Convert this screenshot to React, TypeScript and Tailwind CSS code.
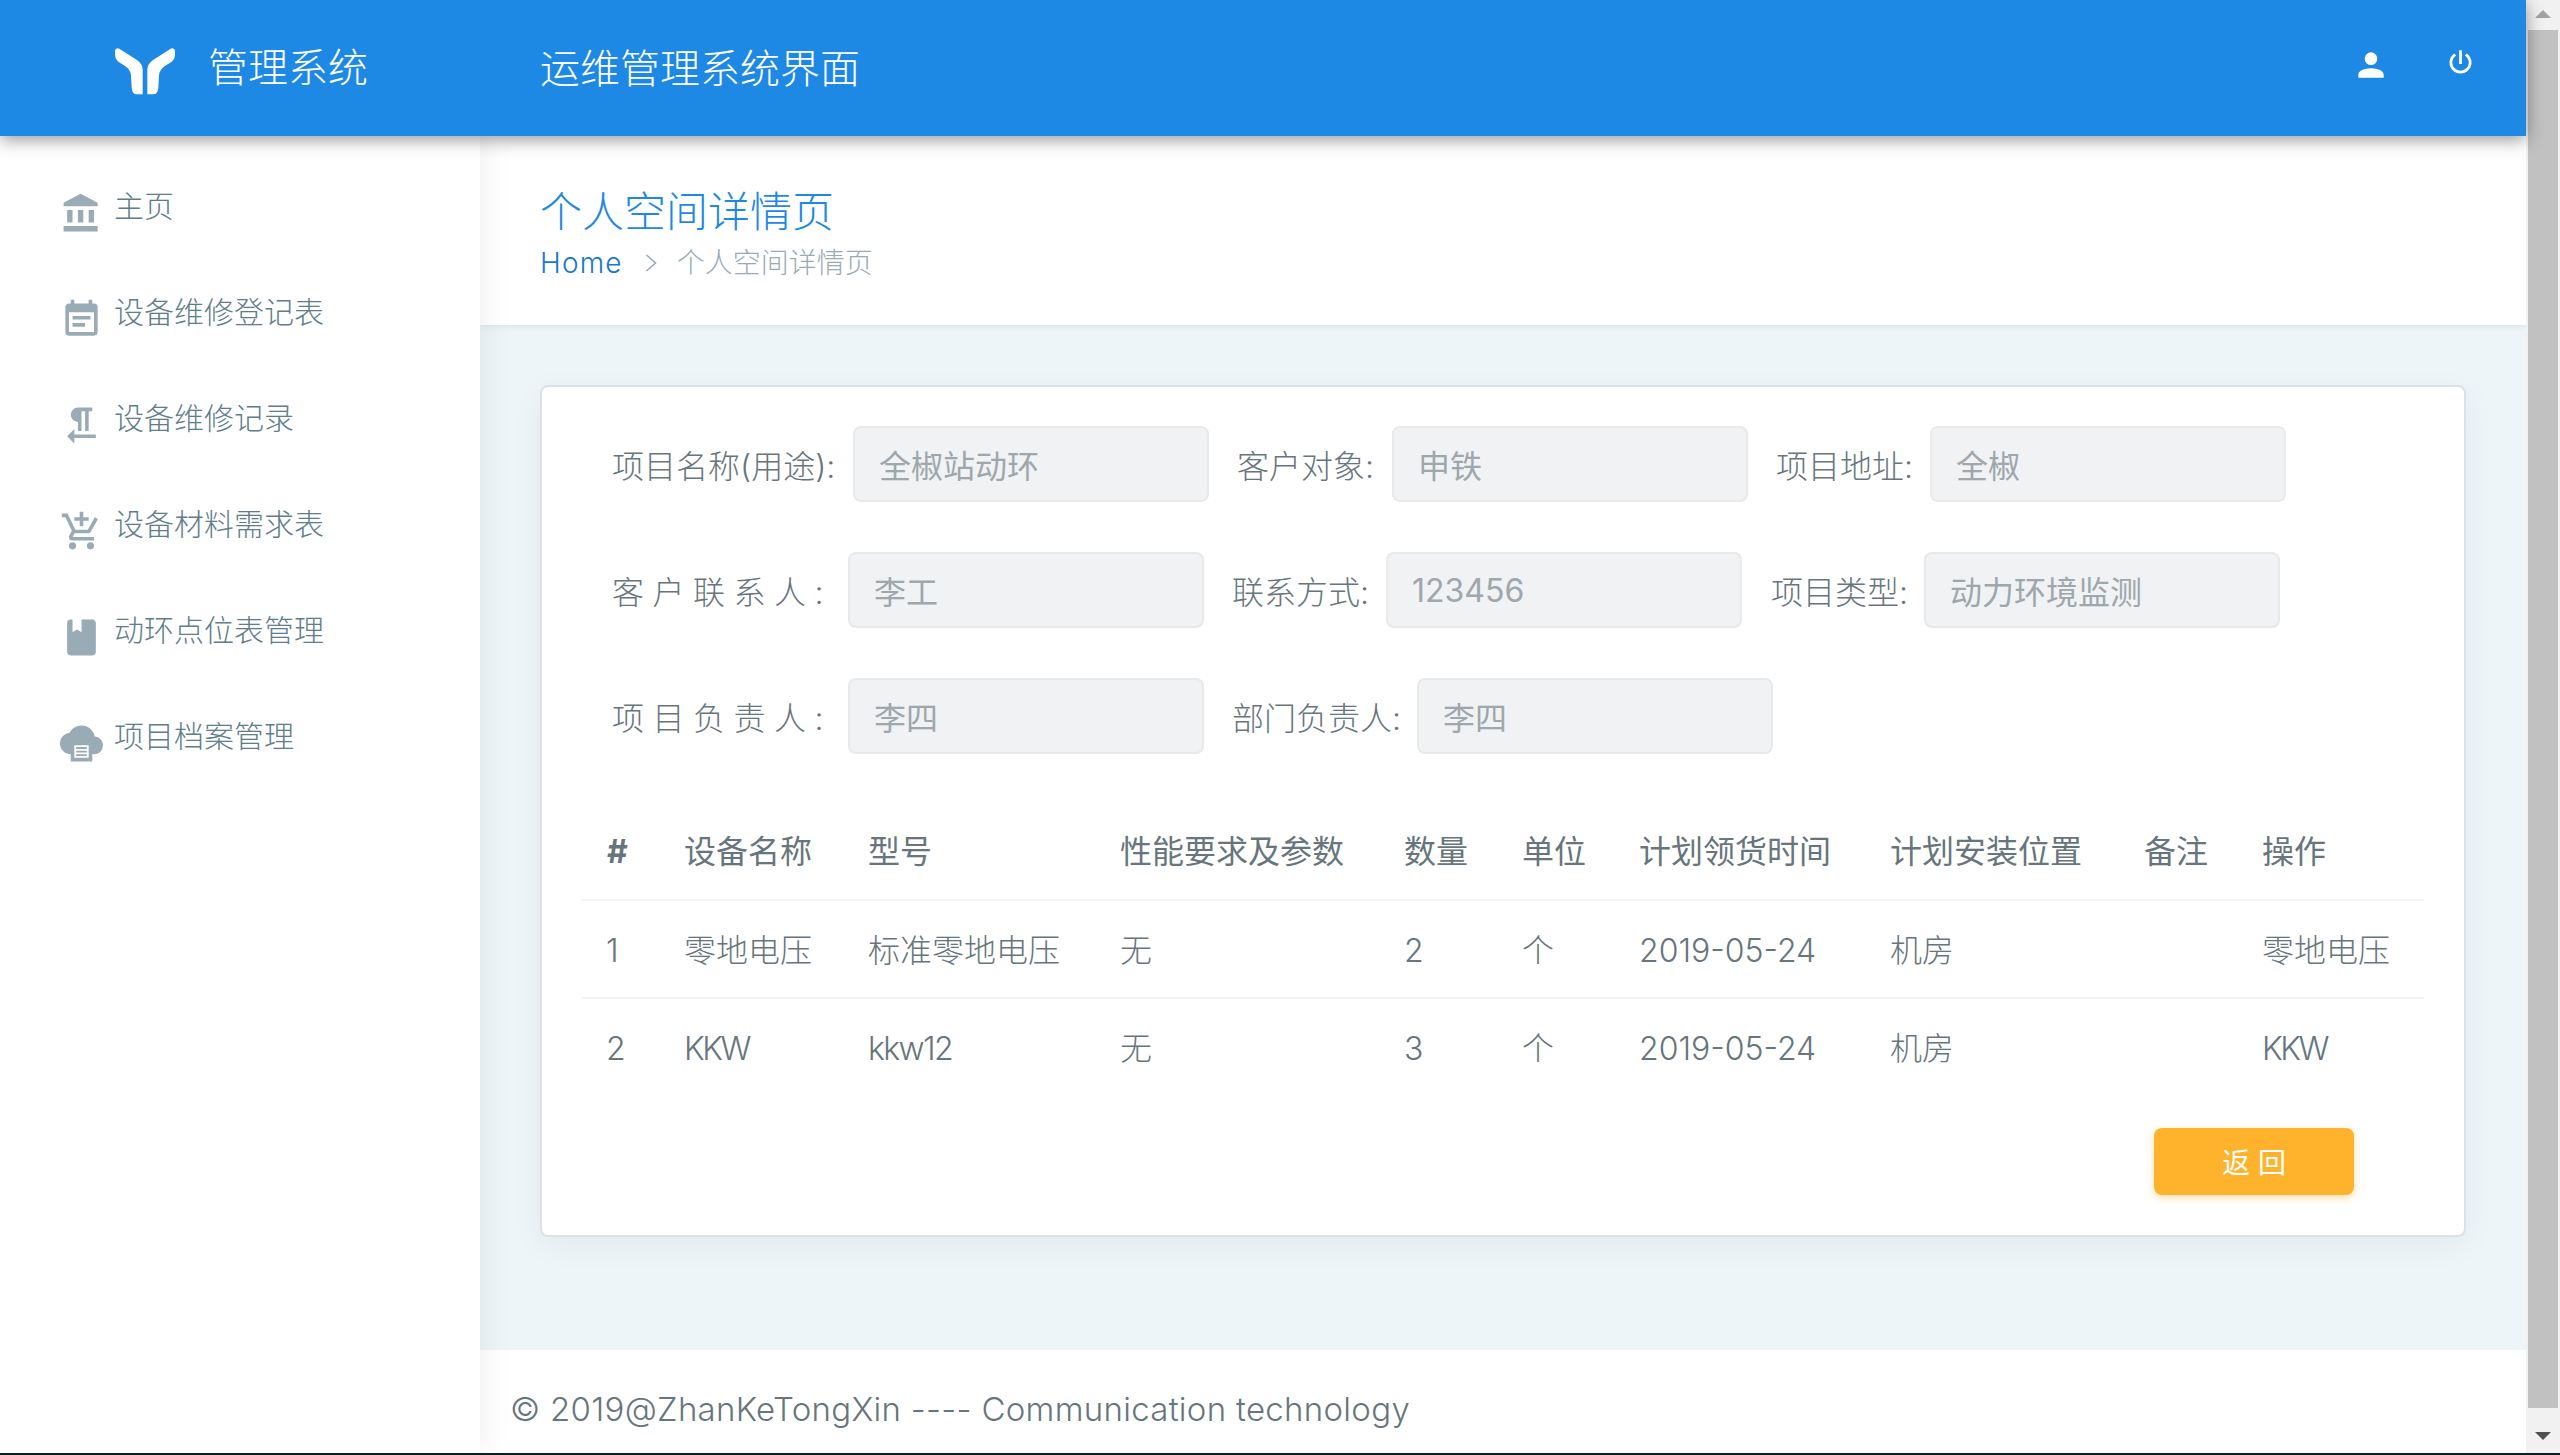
import React from "react";

const fontStack = "font-['Inter','Noto_Sans_CJK_SC',sans-serif]";

const nav = [
  { label: "主页", d: "M11.5,1L2,6V8H21V6M16,10V17H19V10M2,22H21V19H2M10,10V17H13V10M4,10V17H7V10H4Z" },
  { label: "设备维修登记表", d: "M14,14H7V16H14M19,19H5V8H19M19,3H18V1H16V3H8V1H6V3H5C3.89,3 3,3.9 3,5V19A2,2 0 0,0 5,21H19A2,2 0 0,0 21,19V5A2,2 0 0,0 19,3M17,10H7V12H17V10Z" },
  { label: "设备维修记录", d: "M8,17V14L4,18L8,22V19H20V17M10,10V15H12V4H14V15H16V4H18V2H10A4,4 0 0,0 6,6A4,4 0 0,0 10,10Z" },
  { label: "设备材料需求表", d: "M11,9H13V6H16V4H13V1H11V4H8V6H11M7,18A2,2 0 0,0 5,20A2,2 0 0,0 7,22A2,2 0 0,0 9,20A2,2 0 0,0 7,18M17,18A2,2 0 0,0 15,20A2,2 0 0,0 17,22A2,2 0 0,0 19,20A2,2 0 0,0 17,18M7.17,14.75L7.2,14.63L8.1,13H15.55C16.3,13 16.96,12.59 17.3,11.97L21.16,4.96L19.42,4H19.41L18.31,6L15.55,11H8.53L8.4,10.73L6.16,6L5.21,4L4.27,2H1V4H3L6.6,11.59L5.25,14.04C5.09,14.32 5,14.65 5,15A2,2 0 0,0 7,17H19V15H7.42C7.29,15 7.17,14.89 7.17,14.75Z" },
  { label: "动环点位表管理", d: "M18,22A2,2 0 0,0 20,20V4C20,2.89 19.1,2 18,2H12V9L9.5,7.5L7,9V2H6A2,2 0 0,0 4,4V20A2,2 0 0,0 6,22H18Z" },
  { label: "项目档案管理", d: "M12,2C9.11,2 6.6,3.64 5.35,6.04C2.34,6.36 0,8.91 0,12A6,6 0 0,0 6,18V22H18V18H19A5,5 0 0,0 24,13C24,10.36 21.95,8.22 19.35,8.04C18.67,4.59 15.64,2 12,2M8,13H16V20H8V13M9,14V15H15V14H9M9,16V17H15V16H9M9,18V19H15V18H9Z" },
];

const columns = [
  { t: "#", w: "w-[79px] pl-[25px] font-bold" },
  { t: "设备名称", w: "w-[183px] pl-[23px] font-normal" },
  { t: "型号", w: "w-[253px] pl-[24px] font-normal" },
  { t: "性能要求及参数", w: "w-[284px] pl-[23px] font-normal" },
  { t: "数量", w: "w-[118px] pl-[23px] font-normal" },
  { t: "单位", w: "w-[117px] pl-[23px] font-normal" },
  { t: "计划领货时间", w: "w-[252px] pl-[23px] font-normal" },
  { t: "计划安装位置", w: "w-[253px] pl-[22px] font-normal" },
  { t: "备注", w: "w-[118px] pl-[23px] font-normal" },
  { t: "操作", w: "w-[185px] pl-[23px] font-normal" },
];

const rows = [
  ["1", "零地电压", "标准零地电压", "无", "2", "个", "2019-05-24", "机房", "", "零地电压"],
  ["2", "KKW", "kkw12", "无", "3", "个", "2019-05-24", "机房", "", "KKW"],
];

function cellClass(v: string, j: number) {
  const pad = j === 0 ? "pl-[24px]" : j === 2 ? "pl-[24px]" : j === 7 ? "pl-[22px]" : "pl-[23px]";
  const track = v === "KKW" ? "tracking-[-2.5px]" : v === "kkw12" ? "tracking-[-1.6px]" : "";
  return `p-0 pt-[3px] font-light whitespace-nowrap ${pad} ${track}`;
}

function Field({ label, value, labelClass }: { label: string; value: string; labelClass: string }) {
  return (
    <>
      <label className={`shrink-0 whitespace-nowrap pt-[5px] text-[32px] font-light text-[#67757c] ${labelClass}`}>{label}</label>
      <input
        readOnly
        value={value}
        className="h-[76px] w-[356px] shrink-0 rounded-[8px] border-2 border-[#e7e9eb] bg-[#f1f2f4] px-[24px] text-[32px] font-normal text-[#9ea7ab] outline-none"
      />
    </>
  );
}

export default function App() {
  return (
    <div className={`flex h-[1455px] w-[2560px] flex-col overflow-hidden bg-white ${fontStack}`}>
      <div className="flex h-[1453px] w-full">
        <div className="flex h-full w-[2526px] flex-col">
          <header className="relative z-20 flex h-[136px] shrink-0 items-start bg-[#1e88e5] shadow-[0_4px_16px_rgba(0,0,0,0.4)]">
            <div className="flex h-full w-[540px] shrink-0 items-center pl-[115px]">
              <svg viewBox="195 50 180 144" className="mt-[5px] h-[48px] w-[60px]" fill="#ffffff">
                <path d="M195 62Q196 50 208 55L262 90Q278 102 278 118L278 192L258 192Q246 190 245 172L243 135Q241 118 226 108L205 94Q195 86 195 72Z" />
                <path d="M375 62Q374 50 362 55L308 90Q292 102 292 118L292 192L312 192Q324 190 325 172L327 135Q329 118 344 108L365 94Q375 86 375 72Z" />
              </svg>
              <span className="ml-[33px] text-[40px] font-light whitespace-nowrap text-white">管理系统</span>
            </div>
            <div className="flex h-full items-center pt-[2px] text-[40px] font-light whitespace-nowrap text-white">运维管理系统界面</div>
            <div className="ml-auto flex items-start gap-[54px] pt-[46px] pr-[49px] text-white">
              <svg viewBox="0 0 24 24" className="h-[38px] w-[38px]" fill="currentColor">
                <path d="M12,4A4,4 0 0,1 16,8A4,4 0 0,1 12,12A4,4 0 0,1 8,8A4,4 0 0,1 12,4M12,14C16.42,14 20,15.79 20,18V20H4V18C4,15.79 7.58,14 12,14Z" />
              </svg>
              <svg viewBox="0 0 24 24" className="h-[33px] w-[33px]" fill="currentColor">
                <path d="M16.56,5.44L15.11,6.89C16.84,7.94 18,9.83 18,12A6,6 0 0,1 12,18A6,6 0 0,1 6,12C6,9.83 7.16,7.94 8.88,6.88L7.44,5.44C5.36,6.88 4,9.28 4,12A8,8 0 0,0 12,20A8,8 0 0,0 20,12C20,9.28 18.64,6.88 16.56,5.44M13,3H11V13H13" />
              </svg>
            </div>
          </header>

          <div className="flex min-h-0 flex-1">
            <aside className="relative z-10 w-[480px] shrink-0 bg-white pt-[24px] shadow-[1px_0_32px_rgba(0,0,0,0.08)]">
              <nav className="flex flex-col">
                {nav.map((n) => (
                  <a key={n.label} className="flex h-[106px] items-center gap-[11px] pl-[60px]">
                    <svg viewBox="0 0 24 24" className="h-[43px] w-[43px] shrink-0 text-[#99abb4]" fill="currentColor" fillRule="evenodd">
                      <path d={n.d} />
                    </svg>
                    <span className="pb-[13px] text-[30px] font-light whitespace-nowrap text-[#607d8b]">{n.label}</span>
                  </a>
                ))}
              </nav>
            </aside>

            <main className="flex min-w-0 flex-1 flex-col bg-[#eef5f9]">
              <div className="h-[189px] shrink-0 bg-white pt-[51px] pl-[60px] shadow-[1px_0_8px_rgba(0,0,0,0.1)]">
                <h3 className="h-[56px] text-[42px] leading-[50px] font-light text-[#1e88e5]">个人空间详情页</h3>
                <div className="flex h-[40px] items-center text-[28px] font-light">
                  <a className="tracking-[1.2px] text-[#1976d2]">Home</a>
                  <svg viewBox="0 0 12 18" className="mr-[20px] ml-[22px] h-[18px] w-[12px]" fill="none" stroke="#99abb4" strokeWidth="1.6">
                    <path d="M1.5 1L10.5 9L1.5 17" />
                  </svg>
                  <span className="text-[#99abb4]">个人空间详情页</span>
                </div>
              </div>

              <div className="mx-[60px] mt-[60px] rounded-[8px] border-2 border-[#d9e2e7] bg-white px-[40px] pt-[39px] pb-[40px] shadow-[0_8px_32px_rgba(0,0,0,0.05)]">
                <div className="flex flex-col gap-[50px] pl-[30px]">
                  <div className="flex items-center">
                    <Field label="项目名称(用途):" value="全椒站动环" labelClass="w-[241px]" />
                    <Field label="客户对象:" value="申铁" labelClass="ml-[28px] w-[155px]" />
                    <Field label="项目地址:" value="全椒" labelClass="ml-[28px] w-[154px]" />
                  </div>
                  <div className="flex items-center">
                    <Field label="客户联系人:" value="李工" labelClass="w-[236px] tracking-[8.5px]" />
                    <Field label="联系方式:" value="123456" labelClass="ml-[28px] w-[154px]" />
                    <Field label="项目类型:" value="动力环境监测" labelClass="ml-[29px] w-[153px]" />
                  </div>
                  <div className="flex items-center">
                    <Field label="项目负责人:" value="李四" labelClass="w-[236px] tracking-[8.5px]" />
                    <Field label="部门负责人:" value="李四" labelClass="ml-[28px] w-[185px]" />
                  </div>
                </div>

                <table className="mt-[48px] w-[1842px] table-fixed border-collapse text-left text-[32px] text-[#67757c]">
                  <thead>
                    <tr className="h-[98px] border-b-2 border-[#f2f3f3]">
                      {columns.map((c) => (
                        <th key={c.t} className={`p-0 pt-[3px] whitespace-nowrap ${c.w}`}>{c.t}</th>
                      ))}
                    </tr>
                  </thead>
                  <tbody>
                    {rows.map((r, i) => (
                      <tr key={r[0]} className={i === 0 ? "h-[98px] border-b-2 border-[#f2f3f3]" : "h-[98px]"}>
                        {r.map((v, j) => (
                          <td key={j} className={cellClass(v, j)}>{v}</td>
                        ))}
                      </tr>
                    ))}
                  </tbody>
                </table>

                <div className="mt-[32px] flex justify-end pr-[70px]">
                  <button className="h-[67px] w-[200px] rounded-[8px] bg-[#ffb22b] pt-[2px] text-[28px] text-white shadow-[0_3px_8px_rgba(255,178,43,0.4)]">返 回</button>
                </div>
              </div>

              <footer className="mt-auto flex h-[103px] shrink-0 items-center bg-white pt-[16px] pl-[30px] text-[33px] font-light tracking-[0.3px] whitespace-nowrap text-[#67757c]">
                © 2019@ZhanKeTongXin ---- Communication technology
              </footer>
            </main>
          </div>
        </div>

        <div className="flex h-full w-[34px] shrink-0 flex-col bg-[#f1f1f1]">
          <div className="flex h-[30px] shrink-0 items-start justify-center pt-[10px]">
            <svg viewBox="0 0 16 8" className="h-[8px] w-[16px]" fill="#a3a3a3"><polygon points="8,0 16,8 0,8" /></svg>
          </div>
          <div className="mx-auto h-[1378px] w-[30px] bg-[#c1c1c1]" />
          <div className="flex flex-1 items-start justify-center pt-[24px]">
            <svg viewBox="0 0 16 8" className="h-[8px] w-[16px]" fill="#505050"><polygon points="0,0 16,0 8,8" /></svg>
          </div>
        </div>
      </div>
      <div className="h-[2px] w-full bg-[#0a2020]" />
    </div>
  );
}
